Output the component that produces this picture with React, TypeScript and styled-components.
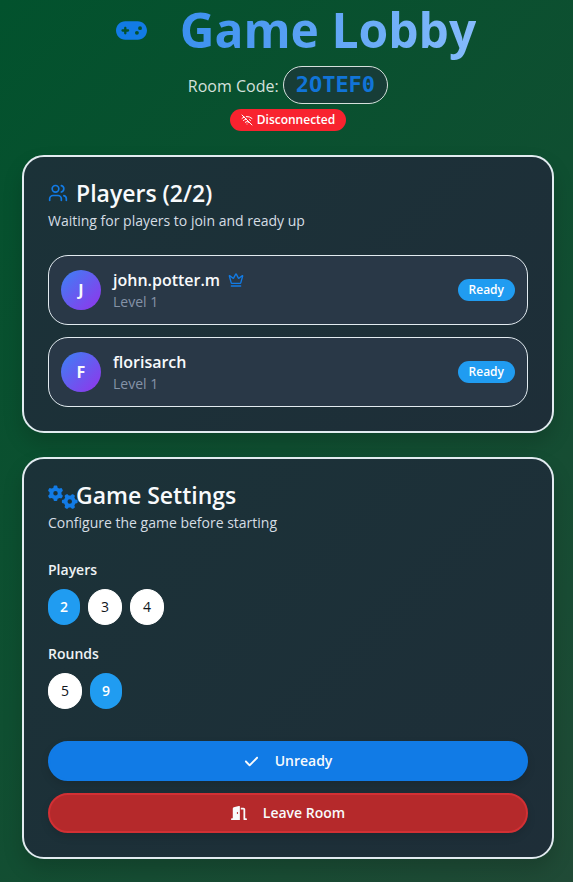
import React, { useState } from "react";
import styled, { createGlobalStyle, css } from "styled-components";
import { Crown, Users, WifiOff } from "lucide-react";
import { FaCheck, FaDoorOpen, FaGamepad, FaGears } from "react-icons/fa6";

const GlobalStyle = createGlobalStyle`
  *, *::before, *::after { box-sizing: border-box; }
  body {
    margin: 0;
    color: #f8fafc;
    font-family: "Open Sans", "Noto Sans", sans-serif;
    font-size: 14px;
    line-height: 20px;
  }
  h1, h2, p, ul, fieldset { margin: 0; padding: 0; border: 0; }
`;

const Page = styled.div`
  min-height: 100vh;
  padding: 0 19px 23px 22px;
  background: linear-gradient(135deg, #02522d 0%, #0f4f31 50%, #204a36 100%);
`;

const Content = styled.main`
  display: flex;
  flex-direction: column;
  gap: 24px;
  max-width: 896px;
  margin: 0 auto;
`;

const Header = styled.header`
  display: flex;
  flex-direction: column;
  align-items: center;
`;

const Heading = styled.div`
  display: flex;
  align-items: center;
  gap: 33px;
  padding-left: 16px;
  color: #127be5;
`;

const Title = styled.h1`
  font-size: 48px;
  line-height: 60px;
  font-weight: 700;
  color: transparent;
  background: linear-gradient(90deg, #3b90ee, #85bbfc);
  background-clip: text;
`;

const RoomRow = styled.p`
  display: flex;
  align-items: baseline;
  gap: 4px;
  margin-top: 6px;
  font-size: 16px;
  color: #d5e0dc;
`;

const RoomCode = styled.span`
  padding: 4px 12px;
  border: 1px solid #d5e0dc;
  border-radius: 20px;
  background: #173d37;
  color: #1174d8;
  font-family: "DejaVu Sans Mono", monospace;
  font-size: 22px;
  line-height: 28px;
  font-weight: 700;
`;

const Badge = styled.span<{ $tone: "info" | "danger" }>`
  display: inline-flex;
  align-items: center;
  gap: 4px;
  padding: 3px 11px;
  border-radius: 11px;
  background: ${({ $tone }) => ($tone === "danger" ? "#f8232f" : "#209cf1")};
  color: #fff;
  font-size: 12px;
  line-height: 16px;
  font-weight: 600;
`;

const Status = styled.div`
  display: flex;
  margin-top: 5px;
`;

const Card = styled.section`
  padding: 24px;
  border: 2px solid #e2ebf0;
  border-radius: 22px;
  background: linear-gradient(135deg, #1b3238, #1e2e38);
  box-shadow: 0 10px 20px rgba(0, 0, 0, 0.16);
`;

const CardHeader = styled.header`
  display: flex;
  flex-direction: column;
  gap: 6px;
  margin-bottom: 24px;
`;

const CardTitle = styled.h2`
  display: flex;
  align-items: center;
  gap: 8px;
  font-size: 23px;
  line-height: 24px;
  font-weight: 600;
`;

const TitleIcon = styled.span`
  display: flex;
  align-items: flex-start;
  width: 20px;
  height: 20px;
  color: #127be5;

  svg { flex: none; }
`;

const GearsIcon = styled(FaGears)`
  width: 30px;
  height: 24px;
`;

const Description = styled.p`
  color: #d5dde4;
`;

const PlayerList = styled.ul`
  display: flex;
  flex-direction: column;
  gap: 12px;
  list-style: none;
`;

const PlayerRow = styled.li`
  display: flex;
  align-items: center;
  gap: 12px;
  padding: 12px;
  border: 1px solid #e2ebf0;
  border-radius: 20px;
  background: #293847;
`;

const Avatar = styled.span`
  display: grid;
  place-items: center;
  width: 40px;
  height: 40px;
  border-radius: 50%;
  background: linear-gradient(135deg, #3b82f6, #9333ea);
  font-size: 16px;
  font-weight: 700;
`;

const PlayerInfo = styled.div`
  flex: 1;
`;

const PlayerName = styled.p`
  display: flex;
  align-items: center;
  gap: 8px;
  font-size: 16px;
  line-height: 24px;
  font-weight: 600;

  svg { color: #127be5; }
`;

const Level = styled.p`
  color: #8593a7;
`;

const Settings = styled.div`
  display: flex;
  flex-direction: column;
  gap: 16px;
`;

const Legend = styled.legend`
  padding: 0;
  margin-bottom: 6px;
  line-height: 26px;
  font-weight: 600;
  color: #eef2f4;
`;

const Options = styled.div`
  display: flex;
  gap: 8px;
`;

const Option = styled.button<{ $selected: boolean }>`
  height: 36px;
  padding: 0 12px;
  border: 0 solid #fff;
  border-radius: 18px;
  background: #fff;
  color: #10151c;
  font: inherit;
  cursor: pointer;
  ${({ $selected }) =>
    $selected
      ? css`
          background: #209cf1;
          color: #fff;
          font-weight: 600;
        `
      : css`
          border-width: 1px;
        `}
`;

const Actions = styled.div`
  display: flex;
  flex-direction: column;
  gap: 12px;
  margin-top: 32px;
`;

const ActionButton = styled.button<{ $danger?: boolean }>`
  display: flex;
  align-items: center;
  justify-content: center;
  gap: 16px;
  height: 40px;
  border: 2px solid ${({ $danger }) => ($danger ? "#d23034" : "#117be6")};
  border-radius: 20px;
  background: ${({ $danger }) => ($danger ? "#b5292b" : "#117be6")};
  box-shadow: 0 4px 8px rgba(0, 0, 0, 0.12);
  color: #f8fafc;
  font: inherit;
  font-weight: 600;
  cursor: pointer;
`;

const players = [
  { name: "john.potter.m", level: 1, host: true },
  { name: "florisarch", level: 1, host: false },
];

interface OptionGroupProps {
  label: string;
  values: number[];
  selected: number;
  onSelect: (value: number) => void;
}

function OptionGroup({ label, values, selected, onSelect }: OptionGroupProps) {
  return (
    <fieldset>
      <Legend>{label}</Legend>
      <Options>
        {values.map((value) => (
          <Option
            key={value}
            type="button"
            $selected={value === selected}
            aria-pressed={value === selected}
            onClick={() => onSelect(value)}
          >
            {value}
          </Option>
        ))}
      </Options>
    </fieldset>
  );
}

export default function App() {
  const [playerCount, setPlayerCount] = useState(2);
  const [rounds, setRounds] = useState(9);

  return (
    <Page>
      <GlobalStyle />
      <Content>
        <Header>
          <Heading>
            <FaGamepad size={31} />
            <Title>Game Lobby</Title>
          </Heading>
          <RoomRow>
            Room Code: <RoomCode>2OTEF0</RoomCode>
          </RoomRow>
          <Status>
            <Badge $tone="danger">
              <WifiOff size={12} />
              Disconnected
            </Badge>
          </Status>
        </Header>

        <Card>
          <CardHeader>
            <CardTitle>
              <TitleIcon><Users size={20} /></TitleIcon>
              Players (2/2)
            </CardTitle>
            <Description>Waiting for players to join and ready up</Description>
          </CardHeader>
          <PlayerList>
            {players.map((player) => (
              <PlayerRow key={player.name}>
                <Avatar>{player.name[0].toUpperCase()}</Avatar>
                <PlayerInfo>
                  <PlayerName>
                    {player.name}
                    {player.host && <Crown size={16} />}
                  </PlayerName>
                  <Level>Level {player.level}</Level>
                </PlayerInfo>
                <Badge $tone="info">Ready</Badge>
              </PlayerRow>
            ))}
          </PlayerList>
        </Card>

        <Card>
          <CardHeader>
            <CardTitle>
              <TitleIcon><GearsIcon /></TitleIcon>
              Game Settings
            </CardTitle>
            <Description>Configure the game before starting</Description>
          </CardHeader>
          <Settings>
            <OptionGroup label="Players" values={[2, 3, 4]} selected={playerCount} onSelect={setPlayerCount} />
            <OptionGroup label="Rounds" values={[5, 9]} selected={rounds} onSelect={setRounds} />
          </Settings>
          <Actions>
            <ActionButton type="button">
              <FaCheck size={15} />
              Unready
            </ActionButton>
            <ActionButton type="button" $danger>
              <FaDoorOpen size={16} />
              Leave Room
            </ActionButton>
          </Actions>
        </Card>
      </Content>
    </Page>
  );
}
